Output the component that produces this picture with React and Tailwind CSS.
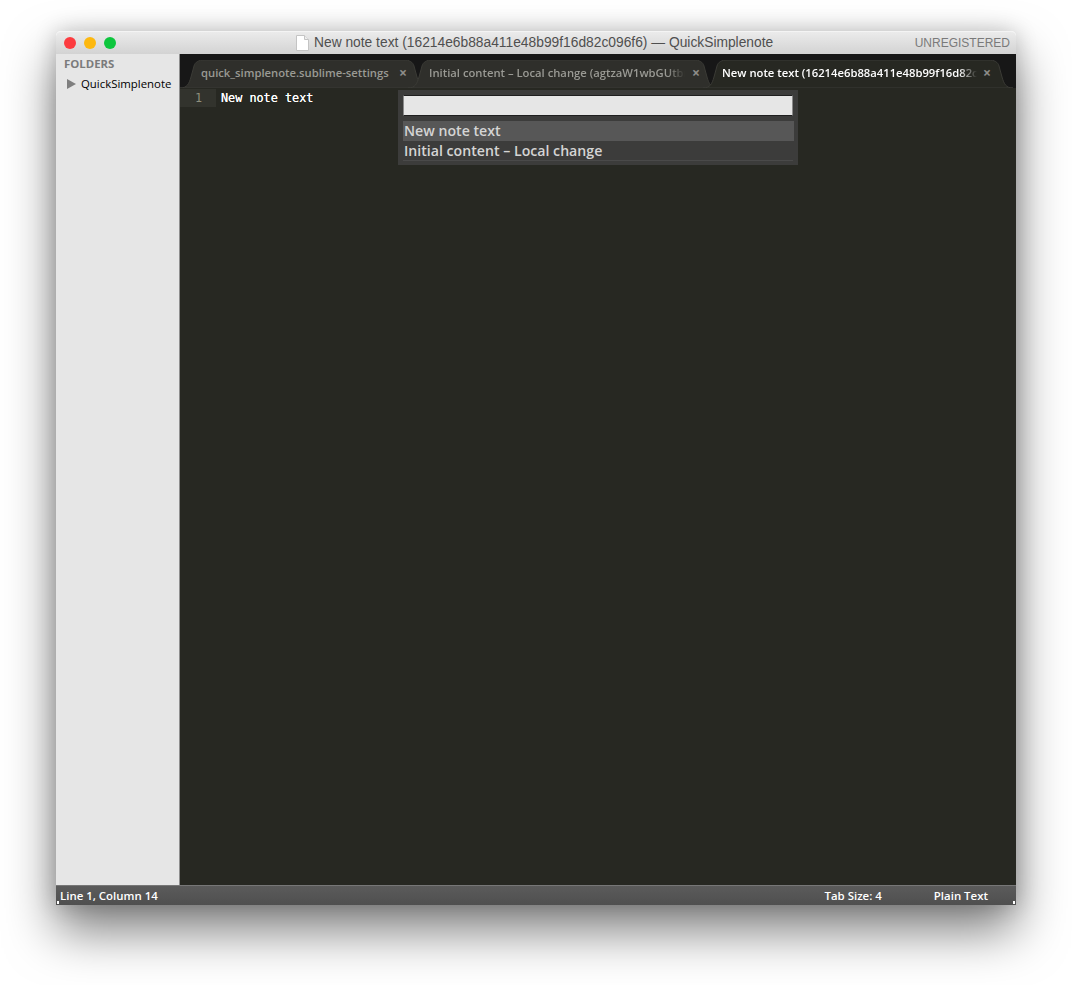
import React from 'react'

const tabs = [
  { title: 'quick_simplenote.sublime-settings', width: 248, text: 'text-[#9a9a94]', pad: 'pl-[21px]', textWidth: 'w-[188px]', closeGap: 'ml-[10px]', overlap: '-mr-[20px]' },
  { title: 'Initial content – Local change (agtzaW1wbGUtbm90ZQ', width: 310, text: 'text-[#9a9a94]', pad: 'pl-[21px]', textWidth: 'w-[256px] [mask-image:linear-gradient(to_right,#000_93%,transparent)]', closeGap: 'ml-[7px]', overlap: '-mr-[15px]' },
  { title: 'New note text (16214e6b88a411e48b99f16d82c096f6)', width: 310, text: 'text-white', pad: 'pl-[19px]', textWidth: 'w-[255px] [mask-image:linear-gradient(to_right,#000_93%,transparent)]', closeGap: 'ml-[6px]', overlap: '', active: true },
]

function TabShape({ width, active }) {
  const w = width
  const d = `M0 28 C7 28 9 24 11 17 L14 6 C15 2 19 0 24 0 L${w - 24} 0 C${w - 19} 0 ${w - 15} 2 ${w - 14} 6 L${w - 11} 17 C${w - 9} 24 ${w - 7} 28 ${w} 28 Z`
  return (
    <svg className="absolute inset-0" width={w} height="28" viewBox={`0 0 ${w} 28`}>
      <path d={d} fill={active ? '#272822' : '#2f2f2b'} stroke="#3b3b36" strokeWidth="1" />
    </svg>
  )
}

function Tab({ tab }) {
  return (
    <div className={`relative h-[28px] shrink-0 ${tab.overlap}`} style={{ width: tab.width }}>
      <TabShape width={tab.width} active={tab.active} />
      <div className={`relative flex h-[26px] items-center ${tab.pad} font-['Open_Sans','DejaVu_Sans',sans-serif] text-[11.25px] font-semibold ${tab.text}`}>
        <span className={`${tab.textWidth} overflow-hidden whitespace-nowrap`}>{tab.title}</span>
        <span className={`${tab.closeGap} text-[14px] font-bold leading-none text-[#8d8d88]`}>×</span>
      </div>
    </div>
  )
}

export default function App() {
  return (
    <div className="h-[985px] w-[1072px] overflow-hidden bg-white pl-[56px] pt-[31px]">
      <div className="flex h-[874px] w-[960px] flex-col rounded-t-[5px] shadow-[0_26px_50px_0_rgba(0,0,0,0.5),0_0_22px_rgba(0,0,0,0.2)]">
        {/* title bar */}
        <div className="relative flex h-[23px] shrink-0 items-center rounded-t-[5px] border-t border-[#f4f4f4] bg-gradient-to-b from-[#ebebeb] to-[#d3d3d3]">
          <div className="ml-[8px] flex gap-[8px]">
            <span className="h-[12px] w-[12px] rounded-full bg-[#fc3b3f]" />
            <span className="h-[12px] w-[12px] rounded-full bg-[#fdb80f]" />
            <span className="h-[12px] w-[12px] rounded-full bg-[#0dc63d]" />
          </div>
          <div className="ml-[180px] flex items-center">
            <svg width="13" height="16" viewBox="0 0 13 16" className="mr-[5px]">
              <path d="M0.5 0.5 H8.5 L12.5 4.5 V15.5 H0.5 Z" fill="#fff" stroke="#c4c4c4" />
              <path d="M8.5 0.5 V4.5 H12.5" fill="#eee" stroke="#c4c4c4" />
            </svg>
            <span className="whitespace-nowrap font-['Liberation_Sans',sans-serif] text-[13.8px] text-[#4f4f4f]">
              New note text (16214e6b88a411e48b99f16d82c096f6) — QuickSimplenote
            </span>
          </div>
          <span className="absolute right-[6px] top-[2px] font-['Liberation_Sans',sans-serif] text-[12px] text-[#7a7a7a]">UNREGISTERED</span>
        </div>

        <div className="flex min-h-0 flex-1">
          {/* sidebar */}
          <div className="w-[124px] shrink-0 border-r border-[#8f8f8f] bg-[#e6e6e6] pl-[8px] font-['Open_Sans','DejaVu_Sans',sans-serif]">
            <div className="mt-[1px] text-[11.4px] font-bold text-[#7b7b7b]">FOLDERS</div>
            <div className="mt-[3px] flex items-center text-[11.4px] text-black">
              <svg width="9" height="10" viewBox="0 0 9 10" className="ml-[3px] mr-[5px]">
                <path d="M0 0 L9 5 L0 10 Z" fill="#7f7f7f" />
              </svg>
              QuickSimplenote
            </div>
          </div>

          {/* editor area */}
          <div className="relative flex min-w-0 flex-1 flex-col bg-[#272822]">
            <div className="flex h-[34px] shrink-0 items-end overflow-hidden bg-[#171717]">
              {tabs.map((tab) => (
                <Tab key={tab.title} tab={tab} />
              ))}
            </div>
            <div className="mt-[1px] flex h-[18px] items-center font-['DejaVu_Sans_Mono',monospace] text-[11.8px] text-white">
              <div className="flex h-full w-[36px] items-center bg-[#32332d] pl-[15px] pt-[2px] text-[#8f8f7c]">1</div>
              <div className="pl-[5px] pt-[2px] [text-shadow:0_0_0.6px_#fff]">New note text</div>
            </div>

            {/* quick panel */}
            <div className="absolute left-[218px] top-[36px] h-[75px] w-[400px] bg-[#3c3c3b] px-[5px] pt-[5px] font-['Open_Sans','DejaVu_Sans',sans-serif]">
              <div className="h-[21px] border border-[#1f1f1f] border-x-[#8a8a8a] bg-[#e6e6e6]" />
              <div className="-mr-[1px] mt-[5px] h-[20px] bg-[#575757] pl-[1px] text-[14.15px] font-semibold leading-[20px] text-[#d4d4d4]">New note text</div>
              <div className="h-[20px] border-b border-[#4a4a4a] pl-[1px] text-[14.15px] font-semibold leading-[20px] text-[#d4d4d4]">Initial content – Local change</div>
            </div>

            <div className="flex-1" />
          </div>
        </div>

        {/* status bar */}
        <div className="relative flex h-[20px] shrink-0 items-center border-t border-[#777] bg-gradient-to-b from-[#5b5b5b] to-[#4f4f4f] pl-[4px] font-['Open_Sans','DejaVu_Sans',sans-serif] text-[11.45px] font-semibold text-white">
          <span>Line 1, Column 14</span>
          <span className="ml-auto">Tab Size: 4</span>
          <span className="ml-[52px] mr-[28px]">Plain Text</span>
          <span className="absolute bottom-[1px] left-[1px] h-[3px] w-[2px] bg-white" />
          <span className="absolute bottom-[1px] right-[1px] h-[3px] w-[2px] bg-white" />
        </div>
      </div>
    </div>
  )
}
